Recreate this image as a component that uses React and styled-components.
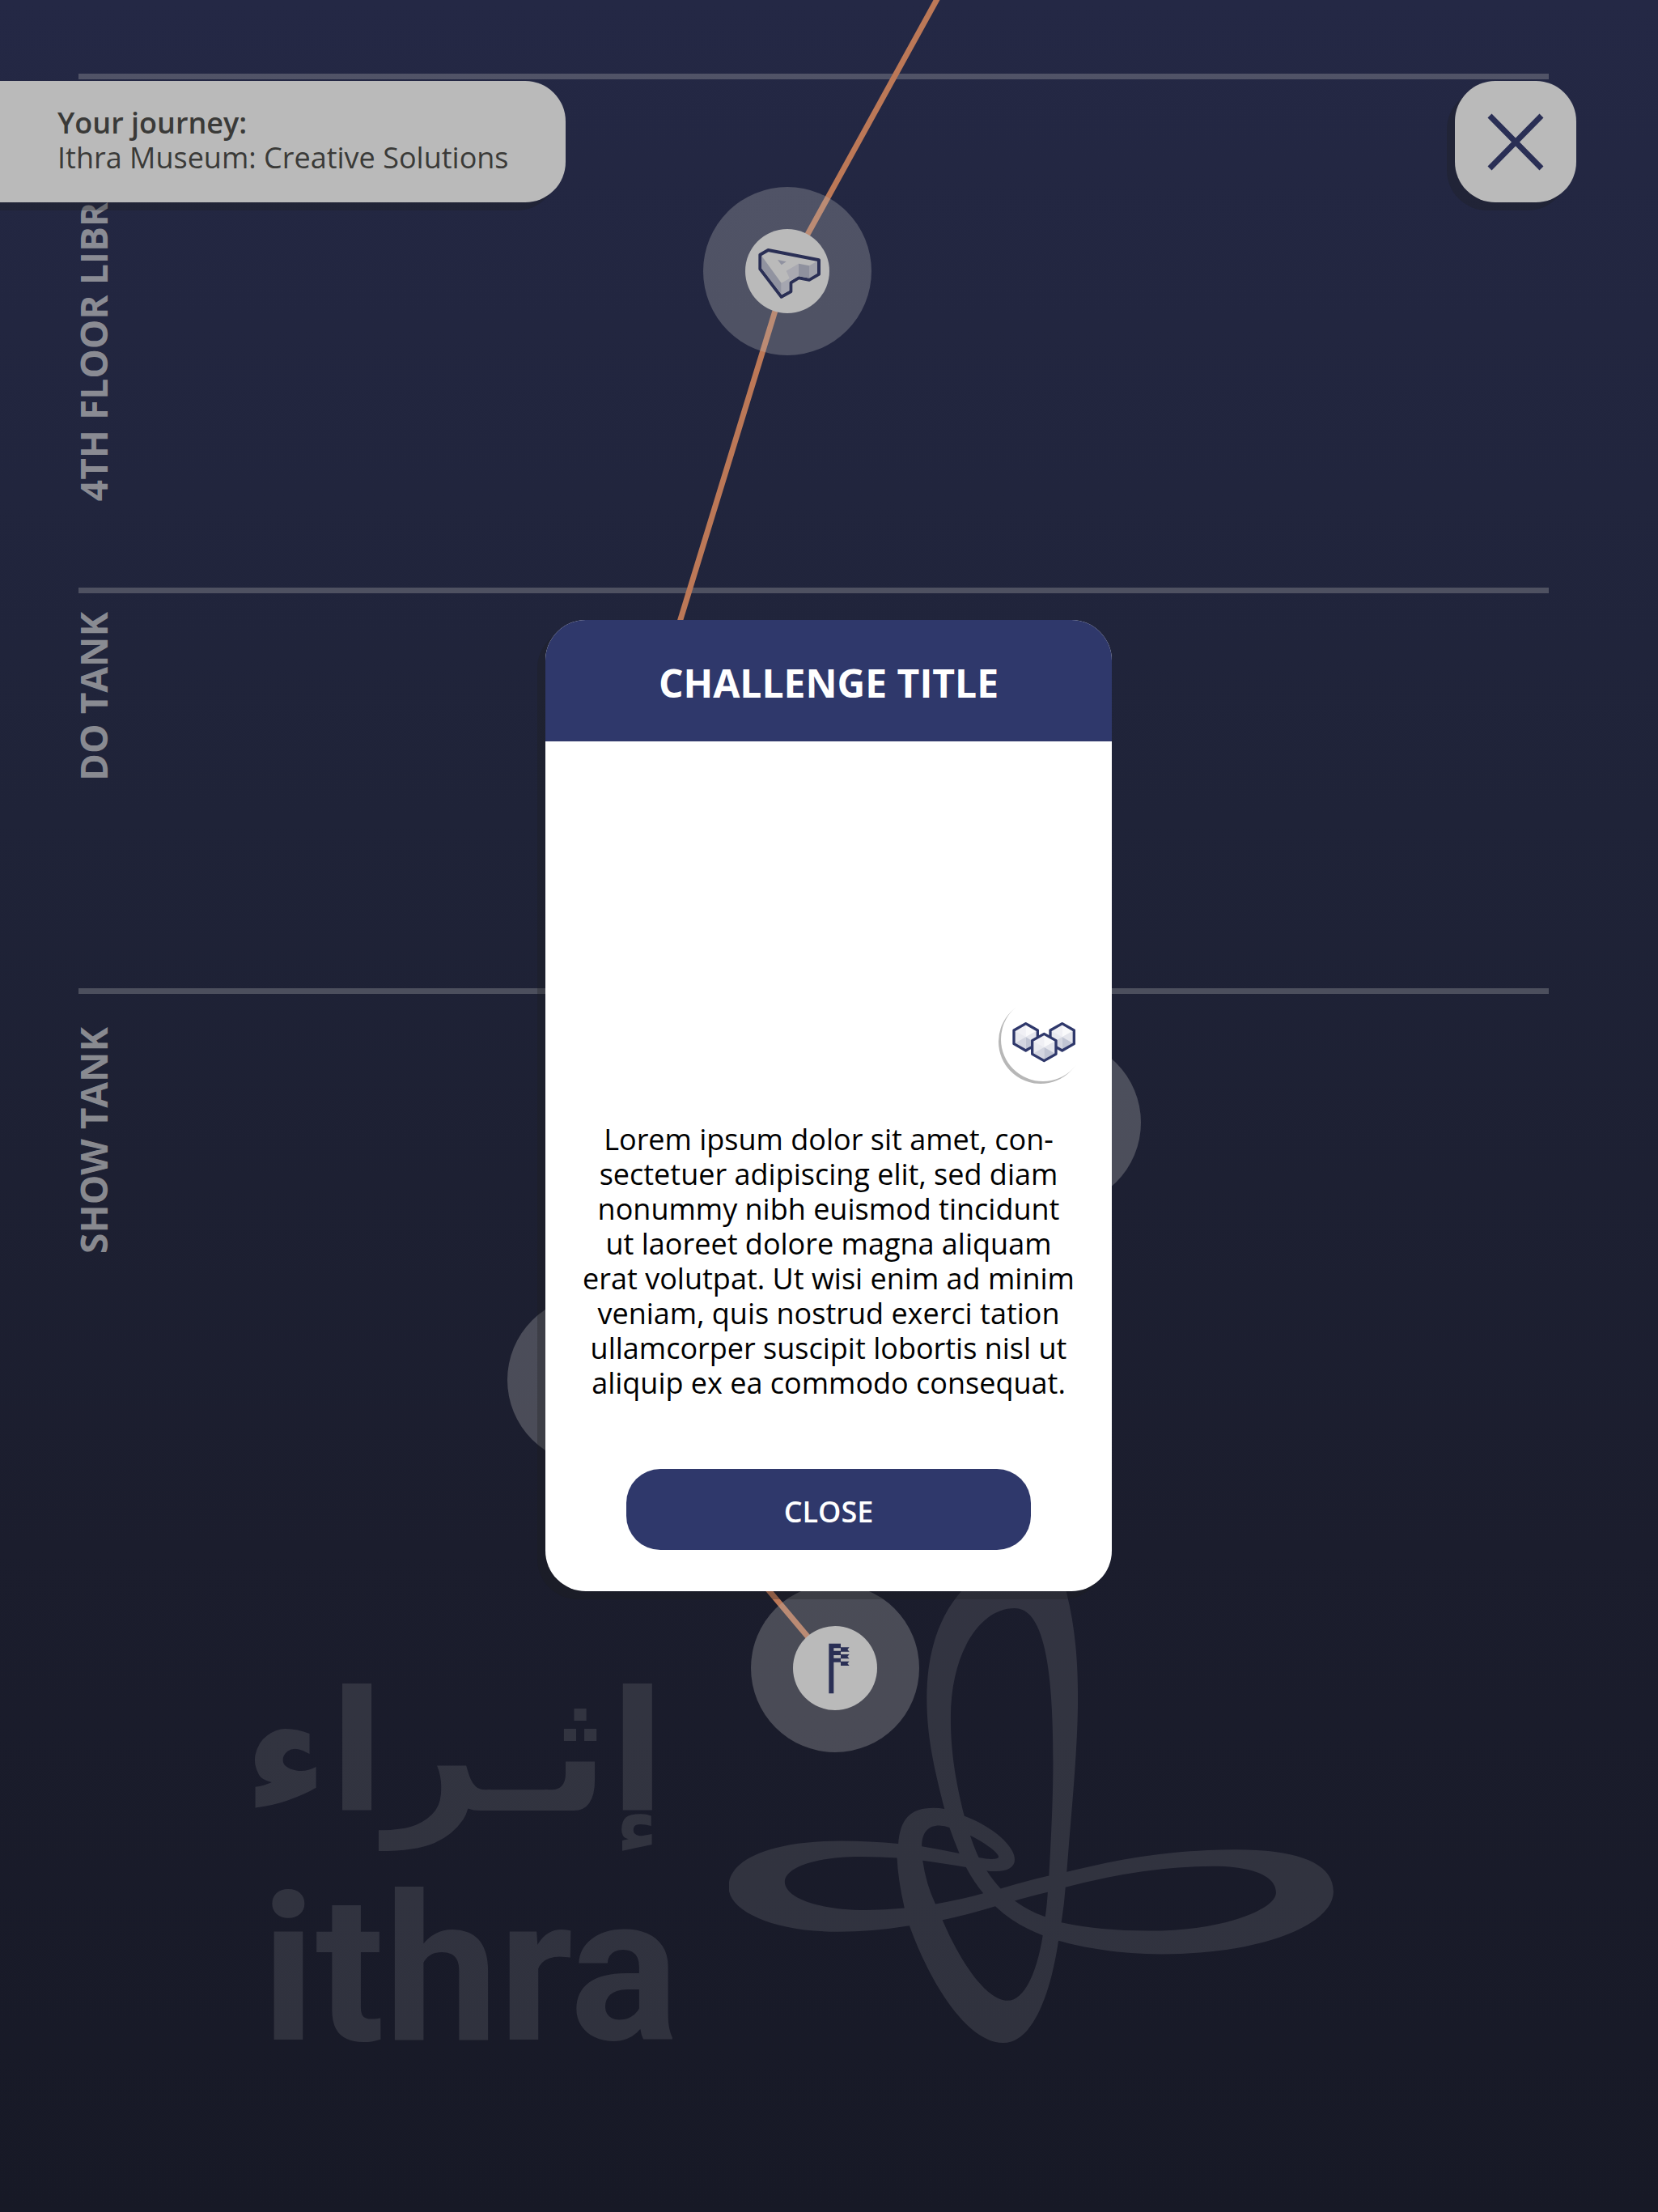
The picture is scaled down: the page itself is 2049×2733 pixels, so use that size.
import React from 'react';
import styled, { createGlobalStyle } from 'styled-components';

const color = {
  navy: '#2f386b',
  navyDim: '#2a2f55',
  grey: '#bababa',
  route: '#bc7857',
  shade: 'rgba(30, 30, 30, 0.3)',
};

const GlobalStyle = createGlobalStyle`
  *, *::before, *::after { box-sizing: border-box; }
  body {
    margin: 0;
    background: #171926;
    font-family: "Open Sans", "Liberation Sans", sans-serif;
  }
  h1, h2, p { margin: 0; }
  button { font-family: inherit; border: 0; padding: 0; cursor: pointer; }
`;

const Page = styled.div`
  position: relative;
  display: flex;
  flex-direction: column;
  min-height: 100vh;
  padding: 91px 135px 0 97px;
  overflow: hidden;
  background: linear-gradient(#242845, #1f2338 37%, #1b1d2d 70%, #171926);
`;

const Floor = styled.section`
  display: flex;
  align-items: ${(p) => p.$align || 'flex-start'};
  min-height: ${(p) => p.$height}px;
  padding: ${(p) => p.$pad};
  border-top: 7px solid rgba(186, 186, 186, 0.3);
`;

const FloorName = styled.h2`
  writing-mode: vertical-rl;
  transform: rotate(180deg);
  font-size: 46px;
  line-height: 36px;
  font-weight: 700;
  white-space: nowrap;
  color: rgba(186, 186, 186, 0.7);
`;

const Brand = styled.footer`
  display: flex;
  align-items: flex-end;
  gap: 78px;
  margin-top: -35px;
  padding: 0 0 208px 226px;
  opacity: 0.15;
  color: ${color.grey};
`;

const Wordmark = styled.div`
  display: flex;
  flex-direction: column;
  gap: 96px;
  width: 500px;
  white-space: nowrap;
`;

const WordArabic = styled.span`
  font: 700 206px/180px Lato, "DejaVu Sans", sans-serif;
`;

const WordLatin = styled.span`
  font: 700 252px/180px Roboto, sans-serif;
`;

const Emblem = styled.svg`
  flex: none;
  width: 748px;
  height: 614px;
`;

const Canvas = styled.div`
  position: absolute;
  inset: 0;
`;

const RouteLine = styled.svg`
  position: absolute;
  inset: 0;
  width: 2049px;
  height: 2733px;
  fill: none;
  stroke: ${color.route};
  stroke-width: 7;
`;

const Stop = styled.button`
  position: absolute;
  left: ${(p) => p.$x}px;
  top: ${(p) => p.$y}px;
  display: grid;
  place-items: center;
  width: 208px;
  height: 208px;
  margin: -104px 0 0 -104px;
  border-radius: 50%;
  background: rgba(186, 186, 186, 0.3);
`;

const StopIcon = styled.svg`
  width: 104px;
  height: 104px;
  border-radius: 50%;
  background: ${color.grey};
`;

const TopBar = styled.header`
  position: absolute;
  inset: 100px 101px auto 0;
  display: flex;
  justify-content: space-between;
`;

const Journey = styled.div`
  height: 150px;
  padding: 30px 70px 0 71px;
  border-radius: 0 50px 50px 0;
  background: ${color.grey};
  box-shadow: -10px 10px 0 ${color.shade};
  color: #3a3a38;
  font-size: 36px;
  line-height: 43px;
`;

const JourneyLabel = styled.p`
  font-weight: 600;
`;

const CloseIconButton = styled.button`
  width: 150px;
  height: 150px;
  border-radius: 50px;
  background: ${color.grey};
  box-shadow: -10px 10px 0 ${color.shade};

  svg {
    display: block;
    stroke: ${color.navyDim};
    stroke-width: 7;
  }
`;

const Backdrop = styled.div`
  position: absolute;
  inset: 0;
  display: grid;
  place-items: center;
  padding: 0 1px 1px 0;
`;

const Dialog = styled.section`
  display: flex;
  flex-direction: column;
  align-items: center;
  width: 700px;
  height: 1200px;
  border-radius: 50px;
  background: #fff;
  box-shadow: -10px 10px 0 ${color.shade};
  overflow: hidden;
`;

const DialogTitle = styled.h1`
  align-self: stretch;
  padding-top: 6px;
  background: ${color.navy};
  color: #fff;
  font-size: 48px;
  line-height: 144px;
  font-weight: 700;
  text-align: center;
`;

const Illustration = styled.div`
  align-self: stretch;
  display: flex;
  align-items: flex-end;
  justify-content: flex-end;
  height: 420px;
  padding-right: 33px;
`;

const Badge = styled.svg`
  width: 104px;
  height: 104px;
  border-radius: 50%;
  background: #fff;
  box-shadow: -3px 3px 0 #b7b7b7;
`;

const Description = styled.p`
  margin-top: 50px;
  color: #000;
  font-size: 36px;
  line-height: 43px;
  text-align: center;
  white-space: nowrap;
`;

const CloseButton = styled.button`
  width: 500px;
  height: 100px;
  margin: auto 0 51px;
  padding-top: 4px;
  border-radius: 42px;
  background: ${color.navy};
  color: #fff;
  font-size: 36px;
  line-height: 43px;
  font-weight: 600;
`;

const description = [
  'Lorem ipsum dolor sit amet, con-',
  'sectetuer adipiscing elit, sed diam',
  'nonummy nibh euismod tincidunt',
  'ut laoreet dolore magna aliquam',
  'erat volutpat. Ut wisi enim ad minim',
  'veniam, quis nostrud exerci tation',
  'ullamcorper suscipit lobortis nisl ut',
  'aliquip ex ea commodo consequat.',
];

function Sculpture() {
  return (
    <StopIcon viewBox="213 219 312 312" aria-hidden="true">
      <path fill="#bababa" stroke="#2a2f55" strokeWidth="12" strokeLinejoin="round" d="M298 297L486 334V386L450 407L411 400L382 418V451L347 470L268 367V314Z" />
      <path fill="#9193a0" d="M274 319L347 419V461L274 365Z" />
      <path fill="#a5a6b0" d="M347 419L381 400L376 414V447L347 462Z" />
      <path fill="#a9a9b1" d="M365 374L411 347V394L381 410Z" />
      <path fill="#8f919e" d="M411 347L450 355V401L411 394Z" />
      <path fill="#a1a2ab" d="M450 355L480 338V383L450 401Z" />
      <path fill="#9092a0" d="M333 333L365 340L347 352Z" />
    </StopIcon>
  );
}

function Flag() {
  return (
    <StopIcon viewBox="239 178 312 312" aria-hidden="true">
      <g fill="#2a2f55">
        <path d="M372 243H416V260H390V270H416V286H390V297H416V312H390V428H372Z" />
        <path d="M416 257H448L441 265L448 273H416ZM416 283H448L441 291L448 299H416ZM416 309H448L441 317L448 325H416Z" />
      </g>
    </StopIcon>
  );
}

function Cube({ x, y }) {
  return (
    <g transform={`translate(${x} ${y})`}>
      <path fill="#e8e9ef" d="M0-50L-44-25V25L0 50L44 25V-25Z" />
      <path fill="#f0f0f5" d="M0 0V-50L-44-25Z" />
      <path fill="#f9f9fb" d="M0 0V-50L44-25Z" />
      <path fill="#e4e5ec" d="M0 0L44-25V25Z" />
      <path fill="#c0c4d3" d="M0 0L44 25L0 50Z" />
      <path fill="#d3d5e0" d="M0 0L0 50L-44 25Z" />
      <path fill="none" stroke="#2f386b" strokeWidth="10" strokeLinejoin="round" d="M0-50L-44-25V25L0 50L44 25V-25Z" />
    </g>
  );
}

export default function App() {
  return (
    <Page>
      <GlobalStyle />
      <Floor $height={635} $align="flex-end" $pad="0 0 107px 0">
        <FloorName>4TH FLOOR LIBRARY</FloorName>
      </Floor>
      <Floor $height={495} $pad="23px 0 0 0">
        <FloorName>DO TANK</FloorName>
      </Floor>
      <Floor $height={724} $pad="41px 0 0 0">
        <FloorName>SHOW TANK</FloorName>
      </Floor>

      <Brand>
        <Wordmark>
          <WordArabic lang="ar" dir="rtl">إثـراء</WordArabic>
          <WordLatin>ithra</WordLatin>
        </Wordmark>
        <Emblem viewBox="22 -30 748 614" aria-hidden="true">
          <path
            transform="scale(0.5102 0.3954)"
            fill="currentColor"
            fillRule="evenodd"
            d="M453 855C458 780 480 743 538 743Q552 743 565 746C540 620 522 520 522 400C522 250 555 140 605 67C640 0 690-60 760-60C830-60 850 0 860 67C880 170 888 270 888 400C888 560 872 760 861 943C980 905 1110 873 1270 873C1420 873 1507 915 1507 1004C1507 1110 1330 1200 1090 1200C990 1200 900 1180 841 1158C820 1340 775 1477 707 1477C620 1477 530 1290 480 1111Q390 1130 308 1130C150 1130 42 1065 42 990C42 900 150 846 315 846Q385 846 453 855Z
            M613 768C590 650 580 560 580 460C580 260 650 119 735 119C810 119 828 330 828 600C828 730 822 860 818 955Q760 972 701 995Q684 972 667 939C672 941 682 941 690 941C718 941 735 928 735 905C735 860 680 800 613 768Z
            M510 863C510 820 525 798 552 798Q566 799 577 804Q588 845 601 885Q555 873 510 863Z
            M627 829C660 850 696 882 696 896C696 904 675 905 648 898Q636 865 627 829Z
            M450 899Q410 895 362 895C250 895 178 930 178 974C178 1020 250 1062 375 1062Q420 1062 468 1056Q452 965 450 899Z
            M512 907Q560 915 617 928Q635 972 659 1010Q605 1030 543 1043Q520 980 512 907Z
            M735 1033Q770 1020 815 1006Q813 1050 809 1083Q770 1066 735 1033Z
            M858 991Q1050 925 1215 925C1310 925 1368 955 1368 1007C1368 1060 1240 1127 1060 1127Q940 1127 848 1101Q855 1045 858 991Z
            M560 1093Q620 1077 688 1050Q735 1108 803 1141C790 1250 760 1345 718 1345C665 1345 600 1215 560 1093Z"
          />
        </Emblem>
      </Brand>

      <Canvas>
        <RouteLine viewBox="0 0 2049 2733" aria-hidden="true">
          <path d="M1163-10L973 335L780 964L1306 1387L731 1705L1031 2061" />
        </RouteLine>
        <Stop $x={973} $y={335} aria-label="Library stop"><Sculpture /></Stop>
        <Stop $x={1306} $y={1387} aria-label="Second stop" />
        <Stop $x={731} $y={1705} aria-label="First stop" />
        <Stop $x={1032} $y={2061} aria-label="Start"><Flag /></Stop>
      </Canvas>

      <TopBar>
        <Journey>
          <JourneyLabel>Your journey:</JourneyLabel>
          <p>Ithra Museum: Creative Solutions</p>
        </Journey>
        <CloseIconButton aria-label="Close journey">
          <svg viewBox="0 0 150 150" width="150" height="150">
            <path d="M43 43L107 108M107 43L43 108" />
          </svg>
        </CloseIconButton>
      </TopBar>

      <Backdrop>
        <Dialog role="dialog" aria-labelledby="challenge-title">
          <DialogTitle id="challenge-title">CHALLENGE TITLE</DialogTitle>
          <Illustration>
            <Badge viewBox="111 65 312 312" aria-hidden="true">
              <Cube x={203} y={213} />
              <Cube x={338} y={213} />
              <Cube x={271} y={251} />
            </Badge>
          </Illustration>
          <Description>
            {description.map((line) => (
              <React.Fragment key={line}>
                {line}
                <br />
              </React.Fragment>
            ))}
          </Description>
          <CloseButton>CLOSE</CloseButton>
        </Dialog>
      </Backdrop>
    </Page>
  );
}
